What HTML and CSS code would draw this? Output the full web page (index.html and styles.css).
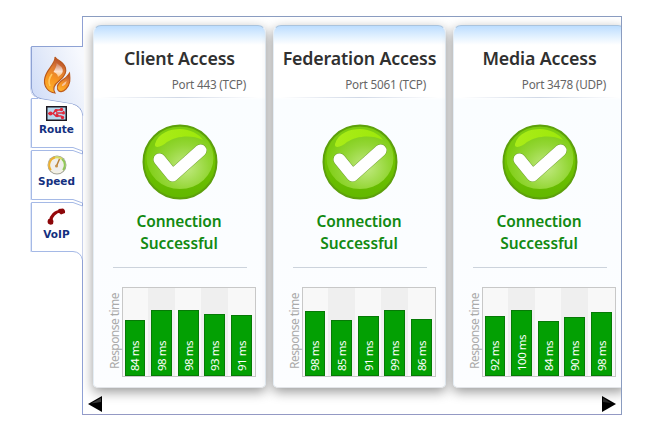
FILE: index.html
```html
<!DOCTYPE html>
<html lang="en">
<head>
    <meta charset="UTF-8">
    <title>Connection Test</title>
    <link rel="stylesheet" href="styles.css">
</head>
<body>
    <div class="app">
        <!-- Side tabs -->
        <nav class="tabs">
            <a class="tab active">
                <svg class="tab-shape" width="54" height="70" viewBox="0 0 54 70">
                    <defs>
                        <linearGradient id="tabFill" x1="0" y1="0.75" x2="1" y2="0.25">
                            <stop offset="0" stop-color="#cfdcf8"/>
                            <stop offset="0.45" stop-color="#e3eaf9"/>
                            <stop offset="1" stop-color="#f7f9fe"/>
                        </linearGradient>
                    </defs>
                    <path d="M54 .5H1.500V42Q2 51 12 53L42 58Q52 60 52.500 70H54Z" fill="url(#tabFill)"/>
                    <path d="M53 .5H1.500V42Q2 51 12 53L42 58Q52 60 52.500 70" fill="none" stroke="#8ea2d4"/>
                    <path d="M.5 1V43Q1 49 5 51" fill="none" stroke="#d3ddf5"/>
                </svg>
                <svg class="icon-flame" width="28" height="38" viewBox="0 0 28 38">
                    <defs>
                        <linearGradient id="flame" x1="0.6" y1="0" x2="0.3" y2="1">
                            <stop offset="0" stop-color="#b04a2a"/>
                            <stop offset="0.3" stop-color="#dd7a34"/>
                            <stop offset="0.6" stop-color="#f79420"/>
                            <stop offset="1" stop-color="#ffb52e"/>
                        </linearGradient>
                        <linearGradient id="flameIn" x1="0" y1="0" x2="0" y2="1">
                            <stop offset="0" stop-color="#c97a58"/>
                            <stop offset="0.6" stop-color="#fbe3d4"/>
                            <stop offset="1" stop-color="#fbc27a"/>
                        </linearGradient>
                    </defs>
                    <path d="M12 1C13 8 2 14 1.500 24C1 31 5 36 12 37C9 32 12 28 16 25C21 21 24 17 22.500 12C21 6 15 5 12 1Z" fill="url(#flame)" stroke="#b9581c" stroke-width="1.100"/>
                    <path d="M13.500 7C14 10 12 13 10.500 16C13 17 14.500 18 15 21C18.500 18.500 20.500 16.500 19.500 13C18.500 10 15.500 9 13.500 7Z" fill="url(#flameIn)"/>
                    <path d="M9 18C6 22 5 26 7 30" fill="none" stroke="#ffc860" stroke-width="1.600"/>
                    <path d="M26.500 17C27 22 28 28 23 33C20 36 16 37 14.500 33C13 28 18 25 21 23C24 21 25 19 26.500 17Z" fill="url(#flame)" stroke="#c05c1a" stroke-width="1.100"/>
                    <path d="M23.500 25C23.500 28 21 30 19 30C18.500 28 21 27 23.500 25Z" fill="#f6c39a"/>
                </svg>
            </a>
            <a class="tab">
                <svg class="tab-shape" width="54" height="56" viewBox="0 0 54 56">
                    <path d="M1.500 .5L10 1L42 6Q51 9 52.500 18V53L43 49.500H1.500Z" fill="#fff"/>
                    <path d="M52.500 53L43 49.500H1.500V.5H8" fill="none" stroke="#a5b9e6"/>
                    <path d="M.5 1V50" stroke="#dfe7f8"/>
                </svg>
                <svg class="icon-route" width="21" height="15" viewBox="0 0 21 15">
                    <rect x=".75" y=".75" width="19.500" height="13.500" fill="#b9d8ee" stroke="#1d1820" stroke-width="1.500"/>
                    <path d="M2 7.500H7L10 4H13L15 3.500M7 7.500L10 10H15L17 11.500M10 7H17L18 5" fill="none" stroke="#dd2b3c" stroke-width="1.400"/>
                    <g fill="#e2283a">
                        <circle cx="4.500" cy="7.500" r="2"/>
                        <circle cx="10" cy="4.500" r="1.600"/>
                        <circle cx="15.500" cy="3.500" r="1.700"/>
                        <circle cx="17.500" cy="7" r="1.500"/>
                        <circle cx="11" cy="9.500" r="1.700"/>
                        <circle cx="16.500" cy="11.500" r="1.700"/>
                    </g>
                </svg>
                <span>Route</span>
            </a>
            <a class="tab">
                <svg class="tab-shape" width="54" height="56" viewBox="0 0 54 56">
                    <path d="M52.500 53L43 49.500H1.500V.5H43L52.500 4" fill="#fff" stroke="#a5b9e6"/>
                    <path d="M.5 1V50" stroke="#dfe7f8"/>
                </svg>
                <svg class="icon-speed" width="20" height="20" viewBox="0 0 20 20">
                    <circle cx="10" cy="10" r="9.500" fill="#a3a398"/>
                    <circle cx="10" cy="10" r="8.600" fill="#f4f1e4"/>
                    <path d="M4 15A7.800 7.800 0 0 1 8 2.500" fill="none" stroke="#ecb030" stroke-width="2"/>
                    <path d="M8 2.500A7.800 7.800 0 0 1 15 4" fill="none" stroke="#d6dc60" stroke-width="2"/>
                    <path d="M15 4A7.800 7.800 0 0 1 16 15" fill="none" stroke="#8fc858" stroke-width="2"/>
                    <circle cx="10" cy="10.500" r="6.200" fill="#efeeec"/>
                    <path d="M9.500 11L12.500 4" stroke="#b87f38" stroke-width="1.500"/>
                    <circle cx="9.500" cy="11" r="1.500" fill="#c8924a"/>
                </svg>
                <span>Speed</span>
            </a>
            <a class="tab">
                <svg class="tab-shape" width="54" height="60" viewBox="0 0 54 60">
                    <path d="M52.500 58Q51 50 43 49.500H1.500V.5H43L52.500 4" fill="#fff" stroke="#a5b9e6"/>
                    <path d="M.5 1V50" stroke="#dfe7f8"/>
                </svg>
                <svg class="icon-phone" width="19" height="17" viewBox="0 0 19 17">
                    <path d="M3.500 13C4 8 8 3.500 14 3" fill="none" stroke="#96090c" stroke-width="3.200"/>
                    <path d="M11.500 1L16 .5Q18.500 1.500 18 5L14 6.500L11.500 4.500Z" fill="#8c0709"/>
                    <path d="M1.500 11L5 10.500L6.500 13L6 16Q3 17.500 1 15.500Q0 13 1.500 11Z" fill="#8c0709"/>
                </svg>
                <span>VoIP</span>
            </a>
        </nav>

        <!-- Results panel -->
        <main class="panel">
            <div class="cards" id="cards"></div>
            <div class="scroller">
                <svg width="14" height="16" viewBox="0 0 14 16"><path d="M0 8L14 0V16Z" fill="#000"/><path d="M3 7.500L13 2V6Z" fill="#3a3a3a"/></svg>
                <svg width="14" height="16" viewBox="0 0 14 16"><path d="M14 8L0 0V16Z" fill="#000"/><path d="M1 2L9 7L1 6Z" fill="#2a2a2a"/></svg>
            </div>
        </main>
    </div>

    <!-- Shared gradients for the status icon -->
    <svg class="defs" width="0" height="0">
        <defs>
            <radialGradient id="ball" cx="0.58" cy="0.65" r="0.6">
                <stop offset="0" stop-color="#c4ea86"/>
                <stop offset="0.6" stop-color="#93d635"/>
                <stop offset="1" stop-color="#7ccc10"/>
            </radialGradient>
            <linearGradient id="gloss" x1="0" y1="0" x2="1" y2="0">
                <stop offset="0" stop-color="#aaec18"/>
                <stop offset="1" stop-color="#9ee80a"/>
            </linearGradient>
            <linearGradient id="rim" x1="0" y1="0" x2="0" y2="1">
                <stop offset="0" stop-color="#7ccb00"/>
                <stop offset="1" stop-color="#62b800"/>
            </linearGradient>
        </defs>
    </svg>

    <script src="script.js"></script>
</body>
</html>
```

FILE: styles.css
```css
* {
    margin: 0;
    padding: 0;
    box-sizing: border-box;
}

body {
    background-color: #fff;
    font-family: 'Noto Sans', 'Open Sans', sans-serif;
    overflow: hidden;
}

.app {
    display: flex;
    padding: 16px 0 0 30px;
}

.defs {
    position: absolute;
}

/* Side tabs */
.tabs {
    display: flex;
    flex-direction: column;
    width: 53px;
    margin-right: -1px;
    padding-top: 30px;
    z-index: 1;
}

.tab {
    position: relative;
    display: flex;
    flex-direction: column;
    align-items: center;
    height: 52px;
    padding-top: 8px;
    font-family: 'DejaVu Sans', sans-serif;
    font-size: 10.5px;
    font-weight: bold;
    line-height: 13px;
    color: #14307f;
}

.tab.active {
    padding-top: 10px;
}

.tab-shape {
    position: absolute;
    top: 0;
    left: 0;
    z-index: -1;
}

.icon-route {
    margin-bottom: 2px;
}

.icon-speed {
    margin-top: -3px;
}

.icon-phone {
    margin: -2px 0 3px;
}

/* Panel */
.panel {
    width: 540px;
    height: 399px;
    padding-top: 8px;
    border: 1px solid #8a9cc0;
    border-left-color: #8fa0d4;
    border-bottom-color: #9499c4;
    overflow: hidden;
}

.cards {
    display: flex;
    gap: 7px;
    padding-left: 10px;
}

.card {
    flex: 0 0 173px;
    height: 363px;
    border-radius: 8px 8px 5px 5px;
    border: 1px solid #e4edf5;
    border-top-color: #a9c3dd;
    border-bottom-color: #e2e4e8;
    background: linear-gradient(#bcddff, #e0f0ff 10px, #fff 19px, #fff 71px, #fafdff 74px, #fcfdff);
    box-shadow: 0 4px 12px rgba(0, 0, 0, 0.4);
    display: flex;
    flex-direction: column;
}

.card-head {
    height: 71px;
    padding-top: 19px;
    text-align: center;
}

.card-head h2 {
    font-size: 17.8px;
    font-weight: 600;
    line-height: 26px;
    letter-spacing: -0.15px;
    color: #303030;
    white-space: nowrap;
}

.card-head p {
    margin-top: 5px;
    padding-right: 19px;
    font-size: 11.7px;
    line-height: 16px;
    letter-spacing: -0.2px;
    text-align: right;
    color: #666;
}

.card-rule {
    height: 1px;
    margin: 0 6px;
    background: linear-gradient(90deg, #fff, #d0d8e6 50%, #fff);
}

.status {
    display: flex;
    flex-direction: column;
    align-items: center;
    margin: 0 18px 0 19px;
    padding: 26px 0 13px;
    border-bottom: 1px solid #ccd3dc;
}

.status svg {
    margin-right: 1px;
}

.status p {
    margin-top: 10px;
    width: 110px;
    padding-right: 2px;
    text-align: center;
    font-size: 15.5px;
    font-weight: 600;
    line-height: 22px;
    letter-spacing: -0.1px;
    color: #128a12;
}

/* Response time chart */
.chart {
    display: flex;
    justify-content: flex-end;
    margin-top: 19px;
    padding-right: 9px;
}

.chart-label {
    writing-mode: vertical-rl;
    transform: rotate(180deg);
    width: 15px;
    height: 90px;
    padding-top: 8px;
    font-size: 12px;
    line-height: 15px;
    letter-spacing: -0.55px;
    color: #aaa;
    white-space: nowrap;
}

.plot {
    display: flex;
    width: 134px;
    height: 90px;
    border: 1px solid #c8c8c8;
    background-color: #f8f8f8;
}

.slot {
    display: flex;
    align-items: flex-end;
    width: 27px;
    padding-left: 3px;
}

.slot:first-child {
    width: 25px;
    padding-left: 2px;
}

.slot:nth-child(even) {
    background-color: #efefef;
}

.bar {
    width: 21px;
    border: 1px solid #067a06;
    background-color: #03a003;
    writing-mode: vertical-rl;
    transform: rotate(180deg);
    padding-top: 4px;
    font-size: 11.5px;
    line-height: 19px;
    letter-spacing: -0.5px;
    color: #fff;
    white-space: nowrap;
}

.slot:first-child .bar {
    width: 20px;
    line-height: 18px;
}

.scroller {
    display: flex;
    justify-content: space-between;
    padding: 8px 5px 0;
}
```

FILE: script.js
```js
// Each bar holds the time in ms and its height in the plot
const results = [
    { name: 'Client Access', port: 'Port 443 (TCP)', bars: [[84, 56], [98, 66], [98, 66], [93, 62], [91, 61]] },
    { name: 'Federation Access', port: 'Port 5061 (TCP)', bars: [[98, 65], [85, 56], [91, 60], [99, 66], [86, 57]] },
    { name: 'Media Access', port: 'Port 3478 (UDP)', bars: [[92, 60], [100, 66], [84, 55], [90, 59], [98, 64]] }
];

const okIcon = `
    <svg width="76" height="76" viewBox="0 0 76 76">
        <circle cx="38" cy="38" r="36.500" fill="url(#rim)" stroke="#5da00c" stroke-width="2"/>
        <ellipse cx="38" cy="34" rx="33.500" ry="31" fill="url(#ball)"/>
        <path d="M13 20C16 9 28 5 38 5C48 5 57 10 61 16C49 10 34 12 25 18C20 23 12 25 13 20Z" fill="url(#gloss)"/>
        <path d="M17.500 35.500L30.500 51.500L58.500 26.500" fill="none" stroke="#6d9f2c" stroke-width="13" stroke-linecap="round" stroke-linejoin="round"/>
        <path d="M17.500 35.500L30.500 51.500L58.500 26.500" fill="none" stroke="#fff" stroke-width="12" stroke-linecap="round" stroke-linejoin="round"/>
    </svg>`;

document.getElementById('cards').innerHTML = results.map(r => `
    <section class="card">
        <div class="card-head">
            <h2>${r.name}</h2>
            <p>${r.port}</p>
        </div>
        <div class="card-rule"></div>
        <div class="status">
            ${okIcon}
            <p>Connection Successful</p>
        </div>
        <div class="chart">
            <div class="chart-label">Response time</div>
            <div class="plot">
                ${r.bars.map(b => `<div class="slot"><div class="bar" style="height:${b[1]}px">${b[0]} ms</div></div>`).join('')}
            </div>
        </div>
    </section>`).join('');
```
